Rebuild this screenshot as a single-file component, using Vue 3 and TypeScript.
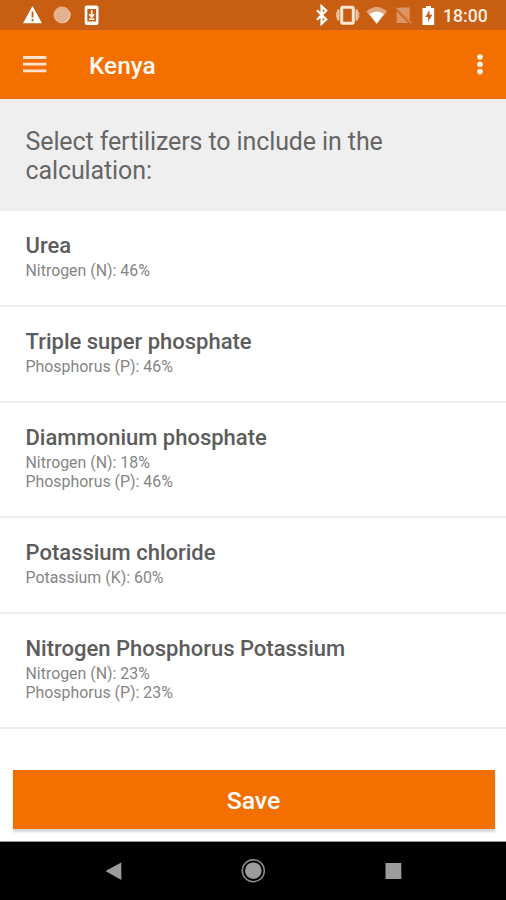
<script setup lang="ts">
interface Fertilizer {
  name: string
  nutrients: string[]
}

const fertilizers: Fertilizer[] = [
  { name: 'Urea', nutrients: ['Nitrogen (N): 46%'] },
  { name: 'Triple super phosphate', nutrients: ['Phosphorus (P): 46%'] },
  { name: 'Diammonium phosphate', nutrients: ['Nitrogen (N): 18%', 'Phosphorus (P): 46%'] },
  { name: 'Potassium chloride', nutrients: ['Potassium (K): 60%'] },
  { name: 'Nitrogen Phosphorus Potassium', nutrients: ['Nitrogen (N): 23%', 'Phosphorus (P): 23%'] },
]
</script>

<template>
  <div class="screen">
    <div class="status">
      <svg width="110" height="30" viewBox="0 0 110 30">
        <path d="M32.500 6 42 23.300H23Z" fill="#fff" />
        <path d="M32.500 11.500v6M32.500 19v2.200" stroke="#c75e12" stroke-width="1.800" />
        <circle cx="62" cy="15" r="8.500" fill="#e3b18b" />
        <path d="M69 10a8.500 8.500 0 0 1-10 12.500a9 9 0 0 0 10-12.500" fill="#f7dfc9" />
        <rect x="84.700" y="5.500" width="13.800" height="19.500" rx="2" fill="#fff" />
        <rect x="87.300" y="9" width="8.800" height="12.500" fill="#c75e12" />
        <path d="M91.700 10v6.500M89.300 14.300l2.400 2.900 2.400-2.900M89 19.300h5.400" fill="none" stroke="#fff" stroke-width="1.600" />
      </svg>
      <div class="status-right">
        <svg width="130" height="30" viewBox="0 0 130 30">
          <path d="m7 10.300 9.200 9.200-4.600 4.200V6.300l4.600 4.200L7 19.700" fill="none" stroke="#fff" stroke-width="2.300" />
          <rect x="31.700" y="7.200" width="11.600" height="16" rx="1" fill="none" stroke="#fbe6d6" stroke-width="3" />
          <path d="M28.300 9.500v11M46.700 9.500v11" stroke="#f0c8aa" stroke-width="2.400" />
          <path d="M26.800 12v6M48.500 12v6" stroke="#e7b48f" stroke-width="1.500" />
          <path d="M56.300 11.500Q66.700 2.500 77 11.500L66.700 23.700Z" fill="#e2a67b" />
          <path d="M59.400 14Q66.700 9 74 14l-7.300 9.700Z" fill="#fff" />
          <path d="M99.700 7.500v12.800L87.600 8.700l2-1.200ZM86.700 11v12h11.700Z" fill="#db9566" />
          <path d="m86 7.700 15.500 15.600" stroke="#db9566" stroke-width="1.200" />
          <path d="M112.500 8h3.500V6h5v2h3.200v17h-11.700Z" fill="#fff" />
          <path d="m119.500 10-4.200 7h2.800v5l4.200-7.200h-2.800Z" fill="#c75e12" />
        </svg>
        <span class="clock">18:00</span>
      </div>
    </div>
    <header class="toolbar">
      <svg width="24" height="18" viewBox="0 0 24 18">
        <path d="M0 2.500h23.400M0 9.200h23.400M0 15.800h23.400" stroke="#fde3cf" stroke-width="2.800" />
      </svg>
      <h1>Kenya</h1>
      <svg class="more" width="6" height="22" viewBox="0 0 6 22">
        <g fill="#fff4eb"><circle cx="3" cy="4" r="2.800" /><circle cx="3" cy="11.300" r="2.800" /><circle cx="3" cy="18.600" r="2.800" /></g>
      </svg>
    </header>
    <p class="intro">Select fertilizers to include in the calculation:</p>
    <main class="list">
      <section v-for="item in fertilizers" :key="item.name" class="item">
        <h2>{{ item.name }}</h2>
        <p v-for="nutrient in item.nutrients" :key="nutrient">{{ nutrient }}</p>
      </section>
    </main>
    <div class="actions"><button type="button">Save</button></div>
    <nav class="navbar">
      <svg width="506" height="58" viewBox="0 0 506 58">
        <g fill="#9c9c9c">
          <path d="M105.500 29 121.300 20.500v17.500Z" />
          <circle cx="253.300" cy="28.700" r="8.300" />
          <circle cx="253.300" cy="28.700" r="11" fill="none" stroke="#8e8e8e" stroke-width="1.500" />
          <rect x="385.500" y="21" width="15.800" height="16" />
        </g>
      </svg>
    </nav>
  </div>
</template>

<style>
body {
  margin: 0;
}
</style>

<style scoped>
.screen {
  display: flex;
  flex-direction: column;
  width: 506px;
  height: 900px;
  overflow: hidden;
  background: #fff;
  color: #5c5c5c;
  font-family: Roboto, "Liberation Sans", sans-serif;
}
h1, h2, p {
  margin: 0;
}
.status {
  display: flex;
  justify-content: space-between;
  flex: none;
  height: 30px;
  background: #c75e12;
}
.status-right {
  display: flex;
  width: 196px;
}
.clock {
  margin-left: 3px;
  color: #fff0e5;
  font-size: 17.600px;
  font-weight: 500;
  line-height: 32px;
}
.toolbar {
  display: flex;
  align-items: center;
  flex: none;
  box-sizing: border-box;
  height: 69px;
  padding: 0 23px;
  border-bottom: 1px solid #e66a10;
  background: #f26f00;
}
h1 {
  margin-left: 42px;
  padding-top: 3px;
  color: #fff8f2;
  font-size: 24.400px;
  font-weight: 500;
  line-height: 30px;
}
.more {
  margin-left: auto;
}
.intro {
  flex: none;
  box-sizing: border-box;
  height: 112px;
  padding: 28px 25.500px 0;
  background: #efefef;
  color: #666;
  font-size: 25px;
  letter-spacing: -0.110px;
  line-height: 29px;
}
.item {
  padding: 20px 25.500px 25px;
  border-bottom: 2px solid #eee;
}
h2 {
  height: 30px;
  font-size: 22px;
  font-weight: 500;
  line-height: 29px;
}
.item p {
  color: #858585;
  font-size: 15.900px;
  line-height: 19px;
}
.actions {
  flex: 1;
  padding: 41px 12px 0 12.500px;
}
button {
  display: block;
  width: 482px;
  height: 59px;
  padding: 2px 0 0;
  border: 0;
  background: #f26f00;
  box-shadow: 0 3px 2px #d2d6d9;
  color: #fff;
  font: 500 24.800px Roboto, "Liberation Sans", sans-serif;
}
.navbar {
  flex: none;
  height: 58px;
  background: #000;
  box-shadow: 0 -1px #999;
}
.navbar svg {
  display: block;
}
</style>
